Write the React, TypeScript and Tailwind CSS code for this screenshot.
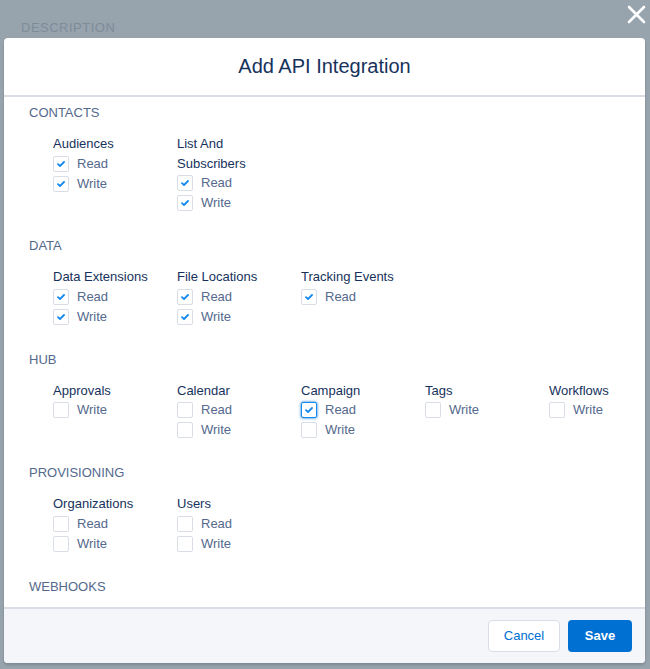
import React from 'react'

type Group = { title: string; perms: { label: string; checked: boolean; focus?: boolean }[] }
type Section = { name: string; groups: Group[] }

const sections: Section[] = [
  {
    name: 'CONTACTS',
    groups: [
      { title: 'Audiences', perms: [{ label: 'Read', checked: true }, { label: 'Write', checked: true }] },
      { title: 'List And Subscribers', perms: [{ label: 'Read', checked: true }, { label: 'Write', checked: true }] },
    ],
  },
  {
    name: 'DATA',
    groups: [
      { title: 'Data Extensions', perms: [{ label: 'Read', checked: true }, { label: 'Write', checked: true }] },
      { title: 'File Locations', perms: [{ label: 'Read', checked: true }, { label: 'Write', checked: true }] },
      { title: 'Tracking Events', perms: [{ label: 'Read', checked: true }] },
    ],
  },
  {
    name: 'HUB',
    groups: [
      { title: 'Approvals', perms: [{ label: 'Write', checked: false }] },
      { title: 'Calendar', perms: [{ label: 'Read', checked: false }, { label: 'Write', checked: false }] },
      { title: 'Campaign', perms: [{ label: 'Read', checked: true, focus: true }, { label: 'Write', checked: false }] },
      { title: 'Tags', perms: [{ label: 'Write', checked: false }] },
      { title: 'Workflows', perms: [{ label: 'Write', checked: false }] },
    ],
  },
  {
    name: 'PROVISIONING',
    groups: [
      { title: 'Organizations', perms: [{ label: 'Read', checked: false }, { label: 'Write', checked: false }] },
      { title: 'Users', perms: [{ label: 'Read', checked: false }, { label: 'Write', checked: false }] },
    ],
  },
]

function Checkbox({ checked, focus }: { checked: boolean; focus?: boolean }) {
  return (
    <span
      className={
        'flex h-4 w-4 shrink-0 items-center justify-center rounded-[2px] border bg-white ' +
        (focus ? 'border-[#1589ee] shadow-[0_0_3px_#0070d2]' : 'border-[#d8dde6]')
      }
    >
      {checked && (
        <svg width="8" height="6" viewBox="0 0 8 6" fill="none">
          <path d="M1 3.2 L3 5 L7 1" stroke="#1589ee" strokeWidth="1.8" strokeLinecap="round" strokeLinejoin="round" />
        </svg>
      )}
    </span>
  )
}

export default function App() {
  return (
    <div className="relative h-[669px] w-[650px] overflow-hidden bg-[#97a3ad] font-['Liberation_Sans',Arial,sans-serif]">
      <p className="absolute left-[21px] top-[18px] text-[13px] tracking-[0.5px] text-[#7e8c99]">DESCRIPTION</p>
      <button className="absolute left-[627px] top-[5px] text-white">
        <svg width="19" height="19" viewBox="0 0 19 19">
          <path d="M2 2 L17 17 M17 2 L2 17" stroke="white" strokeWidth="2.6" strokeLinecap="round" />
        </svg>
      </button>

      <div className="absolute left-[4px] top-[38px] flex h-[625px] w-[641px] flex-col overflow-hidden rounded-[4px] bg-white shadow-[0_2px_3px_rgba(0,0,0,0.16)]">
        <div className="flex h-[59px] shrink-0 items-center justify-center border-b-2 border-[#d8dde6] pb-[2px]">
          <h2 className="text-[20px] text-[#16325c]">Add API Integration</h2>
        </div>

        <div className="flex-1 overflow-hidden px-[25px] pt-[6px]">
          {sections.map((s) => (
            <div key={s.name} className="mb-[23px]">
              <p className="text-[13px] leading-[20px] text-[#54698d]">{s.name}</p>
              <div className="mt-[11px] flex pl-[24px]">
                {s.groups.map((g) => (
                  <div key={g.title} className="w-[124px] shrink-0 pr-3">
                    <p className="text-[13px] leading-[19.5px] text-[#16325c]">{g.title}</p>
                    {g.perms.map((p) => (
                      <label key={p.label} className="flex h-[20px] items-center gap-2 text-[13px] text-[#54698d]">
                        <Checkbox checked={p.checked} focus={p.focus} />
                        <span>{p.label}</span>
                      </label>
                    ))}
                  </div>
                ))}
              </div>
            </div>
          ))}
          <p className="text-[13px] leading-[20px] text-[#54698d]">WEBHOOKS</p>
        </div>

        <div className="flex h-[56px] shrink-0 items-center justify-end gap-2 border-t-2 border-[#d8dde6] bg-[#f4f6f9] pr-[13px]">
          <button className="h-[32px] w-[72px] rounded-[4px] border border-[#d8dde6] bg-white text-[13px] text-[#0070d2]">
            Cancel
          </button>
          <button className="h-[32px] w-[64px] rounded-[4px] bg-[#0070d2] text-[13px] font-bold text-white">
            Save
          </button>
        </div>
      </div>
    </div>
  )
}
